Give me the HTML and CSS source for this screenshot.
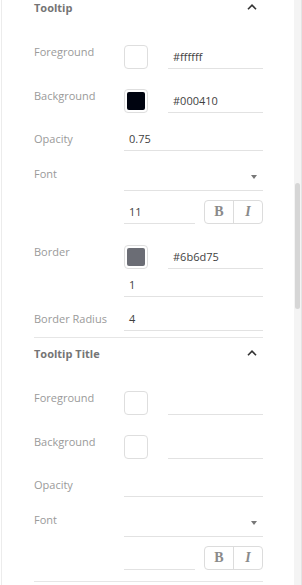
FILE: index.html
```html
<!DOCTYPE html>
<html>
<head>
<meta charset="utf-8">
<link rel="stylesheet" href="styles.css">
</head>
<body>
<div class="app">
  <div class="panel">
    <div class="content">
      <section class="section first">
        <div class="section-head">
          <span class="section-title">Tooltip</span>
          <svg class="chevron" width="10" height="6" viewBox="0 0 10 6"><path d="M1 5.2 L5 1.2 L9 5.2" fill="none" stroke="#333" stroke-width="1.6"/></svg>
        </div>
        <div class="field h-first">
          <div class="label label-top">Foreground</div>
          <div class="control color-control">
            <div class="swatch"><div class="fill fill-white"></div></div>
            <div class="input hex">#ffffff</div>
          </div>
        </div>
        <div class="field h-44">
          <div class="label label-top">Background</div>
          <div class="control color-control">
            <div class="swatch"><div class="fill fill-dark"></div></div>
            <div class="input hex">#000410</div>
          </div>
        </div>
        <div class="field h-38">
          <div class="label">Opacity</div>
          <div class="control"><div class="input text">0.75</div></div>
        </div>
        <div class="field h-40">
          <div class="label label-top">Font</div>
          <div class="control"><div class="input select"><span class="caret"></span></div></div>
        </div>
        <div class="field h-33">
          <div class="label"></div>
          <div class="control size-control">
            <div class="input text size">11</div>
            <div class="styles"><span class="sbtn bold">B</span><span class="sbtn ital">I</span></div>
          </div>
        </div>
        <div class="field h-45">
          <div class="label label-top">Border</div>
          <div class="control color-control">
            <div class="swatch"><div class="fill fill-grey"></div></div>
            <div class="input hex">#6b6d75</div>
          </div>
        </div>
        <div class="field h-28">
          <div class="label"></div>
          <div class="control"><div class="input text">1</div></div>
        </div>
        <div class="field h-34">
          <div class="label">Border Radius</div>
          <div class="control"><div class="input text">4</div></div>
        </div>
      </section>
      <section class="section">
        <div class="section-head">
          <span class="section-title">Tooltip Title</span>
          <svg class="chevron" width="10" height="6" viewBox="0 0 10 6"><path d="M1 5.2 L5 1.2 L9 5.2" fill="none" stroke="#333" stroke-width="1.6"/></svg>
        </div>
        <div class="field h-first">
          <div class="label label-top">Foreground</div>
          <div class="control color-control">
            <div class="swatch"><div class="fill fill-white"></div></div>
            <div class="input hex"></div>
          </div>
        </div>
        <div class="field h-44">
          <div class="label label-top">Background</div>
          <div class="control color-control">
            <div class="swatch"><div class="fill fill-white"></div></div>
            <div class="input hex"></div>
          </div>
        </div>
        <div class="field h-38">
          <div class="label">Opacity</div>
          <div class="control"><div class="input text"></div></div>
        </div>
        <div class="field h-40">
          <div class="label label-top">Font</div>
          <div class="control"><div class="input select"><span class="caret"></span></div></div>
        </div>
        <div class="field h-33 last-gap">
          <div class="label"></div>
          <div class="control size-control">
            <div class="input text size"></div>
            <div class="styles"><span class="sbtn bold">B</span><span class="sbtn ital">I</span></div>
          </div>
        </div>
      </section>
    </div>
  </div>
  <div class="scrollbar"><div class="thumb"></div></div>
</div>
</body>
</html>
```
FILE: styles.css
```css
* { box-sizing: border-box; }
html, body { margin: 0; padding: 0; background: #fff; }
body {
  font-family: "Open Sans", "Noto Sans", sans-serif;
  font-size: 11px;
  color: #444;
}
.app {
  display: flex;
  width: 302px;
  height: 585px;
  overflow: hidden;
}
.panel {
  flex: 1;
  margin-left: 1px;
  border-left: 1px solid #ececec;
  overflow: hidden;
}
.content {
  padding: 0 31px 0 32px;
}
.section {
  padding-top: 8px;
  padding-bottom: 6px;
  border-bottom: 1px solid #e6e6e6;
}
.section.first { margin-top: -8px; }
.section-head {
  display: flex;
  align-items: center;
  justify-content: space-between;
  height: 16px;
  line-height: 16px;
}
.section-title {
  font-weight: 700;
  color: #757575;
  font-size: 11px;
}
.chevron {
  margin-right: 6px;
  margin-top: -2px;
}
.field {
  display: flex;
  align-items: flex-end;
}
.h-first { height: 53px; }
.h-44 { height: 44px; }
.h-38 { height: 38px; }
.h-40 { height: 40px; }
.h-33 { height: 33px; }
.h-45 { height: 45px; }
.h-28 { height: 28px; }
.h-34 { height: 34px; }
.last-gap { margin-bottom: 5px; }
.label {
  width: 90px;
  flex: none;
  color: #9a9a9a;
  line-height: 24px;
  white-space: nowrap;
}
.label-top {
  line-height: 14px;
  padding-bottom: 10px;
}
.control {
  flex: 1;
  display: flex;
  align-items: flex-end;
}
.input {
  height: 24px;
  line-height: 23px;
  border-bottom: 1px solid #e2e2e2;
  color: #3f3f3f;
  padding-left: 5px;
  flex: 1;
}
.color-control .swatch { margin-right: 20px; }
.swatch {
  width: 24px;
  height: 24px;
  flex: none;
  border: 1px solid #dedede;
  border-radius: 4px;
  padding: 2px;
}
.fill {
  width: 100%;
  height: 100%;
  border-radius: 2px;
}
.fill-white { background: #fff; }
.fill-dark { background: #000410; }
.fill-grey { background: #6b6d75; }
.select {
  display: flex;
  justify-content: flex-end;
  align-items: center;
  padding-bottom: 3px;
}
.caret {
  width: 0;
  height: 0;
  border-left: 3.5px solid transparent;
  border-right: 3.5px solid transparent;
  border-top: 4px solid #777;
  margin-right: 6px;
}
.size-control { gap: 9px; }
.size { flex: none; width: 71px; }
.styles {
  display: flex;
  width: 59px;
  height: 24px;
  border: 1px solid #dcdcdc;
  border-radius: 4px;
  flex: none;
}
.sbtn {
  flex: 1;
  display: flex;
  align-items: center;
  justify-content: center;
  font-family: "Liberation Serif", serif;
  font-weight: 700;
  font-size: 14px;
  color: #8a8a8a;
}
.sbtn + .sbtn { border-left: 1px solid #dcdcdc; }
.ital { font-style: italic; }
.scrollbar {
  width: 8px;
  flex: none;
  background: #f4f4f4;
  border-right: 1px solid #e4e4e4;
}
.thumb {
  margin-top: 183px;
  margin-left: 1px;
  width: 5px;
  height: 126px;
  border-radius: 3px;
  background: #d6d6d6;
}
```
